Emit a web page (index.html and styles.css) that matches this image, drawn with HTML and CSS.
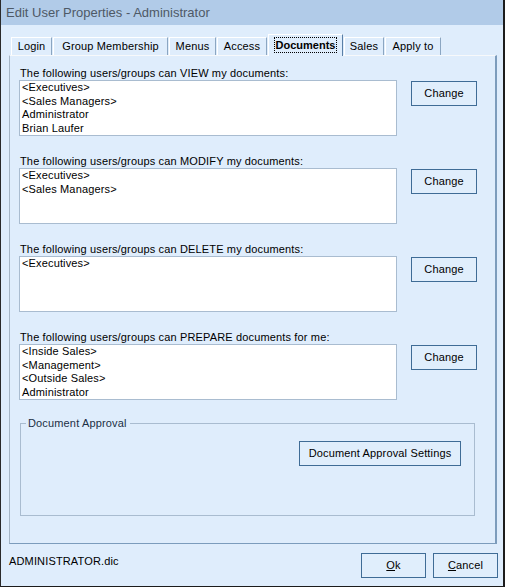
FILE: index.html
```html
<!DOCTYPE html>
<html>
<head>
<meta charset="utf-8">
<title>Edit User Properties - Administrator</title>
<link rel="stylesheet" href="styles.css">
</head>
<body>
<div class="window">
  <div class="titlebar">Edit User Properties - Administrator</div>
  <div class="content">
    <div class="tabs">
      <div class="tab t-login">Login</div>
      <div class="tab t-group">Group Membership</div>
      <div class="tab t-menus">Menus</div>
      <div class="tab t-access">Access</div>
      <div class="tab t-docs selected"><span class="focus">Documents</span></div>
      <div class="tab t-sales">Sales</div>
      <div class="tab t-apply">Apply to</div>
    </div>
    <div class="panel">
      <div class="section">
        <div class="label">The following users/groups can VIEW my documents:</div>
        <div class="row">
          <div class="listbox">
            <div class="item">&lt;Executives&gt;</div>
            <div class="item">&lt;Sales Managers&gt;</div>
            <div class="item">Administrator</div>
            <div class="item">Brian Laufer</div>
          </div>
          <div class="btn change">Change</div>
        </div>
      </div>
      <div class="section">
        <div class="label">The following users/groups can MODIFY my documents:</div>
        <div class="row">
          <div class="listbox">
            <div class="item">&lt;Executives&gt;</div>
            <div class="item">&lt;Sales Managers&gt;</div>
          </div>
          <div class="btn change">Change</div>
        </div>
      </div>
      <div class="section">
        <div class="label">The following users/groups can DELETE my documents:</div>
        <div class="row">
          <div class="listbox">
            <div class="item">&lt;Executives&gt;</div>
          </div>
          <div class="btn change">Change</div>
        </div>
      </div>
      <div class="section">
        <div class="label">The following users/groups can PREPARE documents for me:</div>
        <div class="row">
          <div class="listbox">
            <div class="item">&lt;Inside Sales&gt;</div>
            <div class="item">&lt;Management&gt;</div>
            <div class="item">&lt;Outside Sales&gt;</div>
            <div class="item">Administrator</div>
          </div>
          <div class="btn change">Change</div>
        </div>
      </div>
      <fieldset class="group">
        <legend class="legend">Document Approval</legend>
        <div class="group-row">
          <div class="btn approval">Document Approval Settings</div>
        </div>
      </fieldset>
    </div>
    <div class="footer">
      <div class="file">ADMINISTRATOR.dic</div>
      <div class="actions">
        <div class="btn action"><u>O</u>k</div>
        <div class="btn action"><u>C</u>ancel</div>
      </div>
    </div>
  </div>
</div>
</body>
</html>
```
FILE: styles.css
```css
html, body {
  margin: 0;
  padding: 0;
  background: #ffffff;
}

.window {
  width: 505px;
  height: 587px;
  box-sizing: border-box;
  border-left: 1px solid #2a2a2a;
  border-right: 2px solid #1c1c1c;
  border-bottom: 1px solid #1c1c1c;
  background: #dfedfc;
  display: flex;
  flex-direction: column;
  font-family: "Liberation Sans", Arial, sans-serif;
  font-size: 11px;
  letter-spacing: 0.15px;
  color: #000;
  overflow: hidden;
}

.titlebar {
  height: 25px;
  flex: none;
  background: #b1cbe8;
  padding-left: 5px;
  line-height: 25px;
  font-size: 13px;
  letter-spacing: 0;
  color: #4e5966;
  white-space: nowrap;
}

.content {
  flex: 1;
  display: flex;
  flex-direction: column;
  padding: 9px 6px 0 8px;
}

.tabs {
  display: flex;
  align-items: flex-end;
  height: 21px;
  gap: 1px;
  padding-left: 2px;
  flex: none;
}

.tab {
  height: 18px;
  box-sizing: border-box;
  border-top: 1px solid #ffffff;
  border-left: 1px solid #ffffff;
  border-right: 1px solid #8ba6c2;
  text-align: center;
  line-height: 17px;
  white-space: nowrap;
  background: #dfedfc;
}

.t-login { width: 41px; }
.t-group { width: 115px; }
.t-menus { width: 47px; }
.t-access { width: 50px; }
.t-docs { width: 75px; }
.t-sales { width: 40px; }
.t-apply { width: 56px; }

.tab.selected {
  height: 22px;
  margin-bottom: -1px;
  position: relative;
  z-index: 1;
  font-weight: bold;
  letter-spacing: 0;
  line-height: 18px;
  border-right-color: #5a7fa6;
  padding-top: 1px;
}

.focus {
  display: inline-block;
  border: 1px dotted #000;
  padding: 0 1px;
  line-height: 14px;
}

.panel {
  height: 489px;
  flex: none;
  box-sizing: border-box;
  border-top: 1px solid #f7f9fb;
  border-left: 1px solid #a6b6c6;
  border-right: 2px solid #7c9cbc;
  border-bottom: 1px solid #7c9cbc;
  padding: 11px 0 0 9px;
  display: flex;
  flex-direction: column;
  gap: 19px;
}

.section {
  display: flex;
  flex-direction: column;
}

.label {
  height: 13px;
  line-height: 13px;
  padding-left: 1px;
  white-space: nowrap;
}

.row {
  display: flex;
  align-items: flex-start;
  gap: 14px;
}

.listbox {
  width: 378px;
  height: 56px;
  box-sizing: border-box;
  background: #ffffff;
  border: 1px solid #a9bcd0;
  padding: 0 2px;
}

.item {
  height: 13.6px;
  line-height: 13.6px;
  white-space: nowrap;
}

.btn {
  box-sizing: border-box;
  border: 1px solid #3f6c96;
  background: #e0eefc;
  text-align: center;
  white-space: nowrap;
}

.change {
  width: 66px;
  height: 25px;
  line-height: 23px;
  margin-top: 1px;
}

.group {
  margin: -2px 0 0 1px;
  width: 455px;
  height: 99px;
  box-sizing: border-box;
  border: 1px solid #a9bcd0;
  padding: 0 13px 0 0;
}

.legend {
  padding: 0 3px 0 2px;
  margin-left: 5px;
  line-height: 13px;
  color: #1c2f44;
}

.group-row {
  display: flex;
  justify-content: flex-end;
  padding-top: 11px;
}

.approval {
  width: 162px;
  height: 25px;
  line-height: 23px;
}

.footer {
  flex: 1;
  display: flex;
  justify-content: space-between;
  align-items: flex-start;
  padding-top: 9px;
  margin-right: -1px;
}

.file {
  padding-top: 2px;
  line-height: 13px;
}

.actions {
  display: flex;
  gap: 7px;
}

.action {
  width: 65px;
  height: 25px;
  line-height: 23px;
}
```
